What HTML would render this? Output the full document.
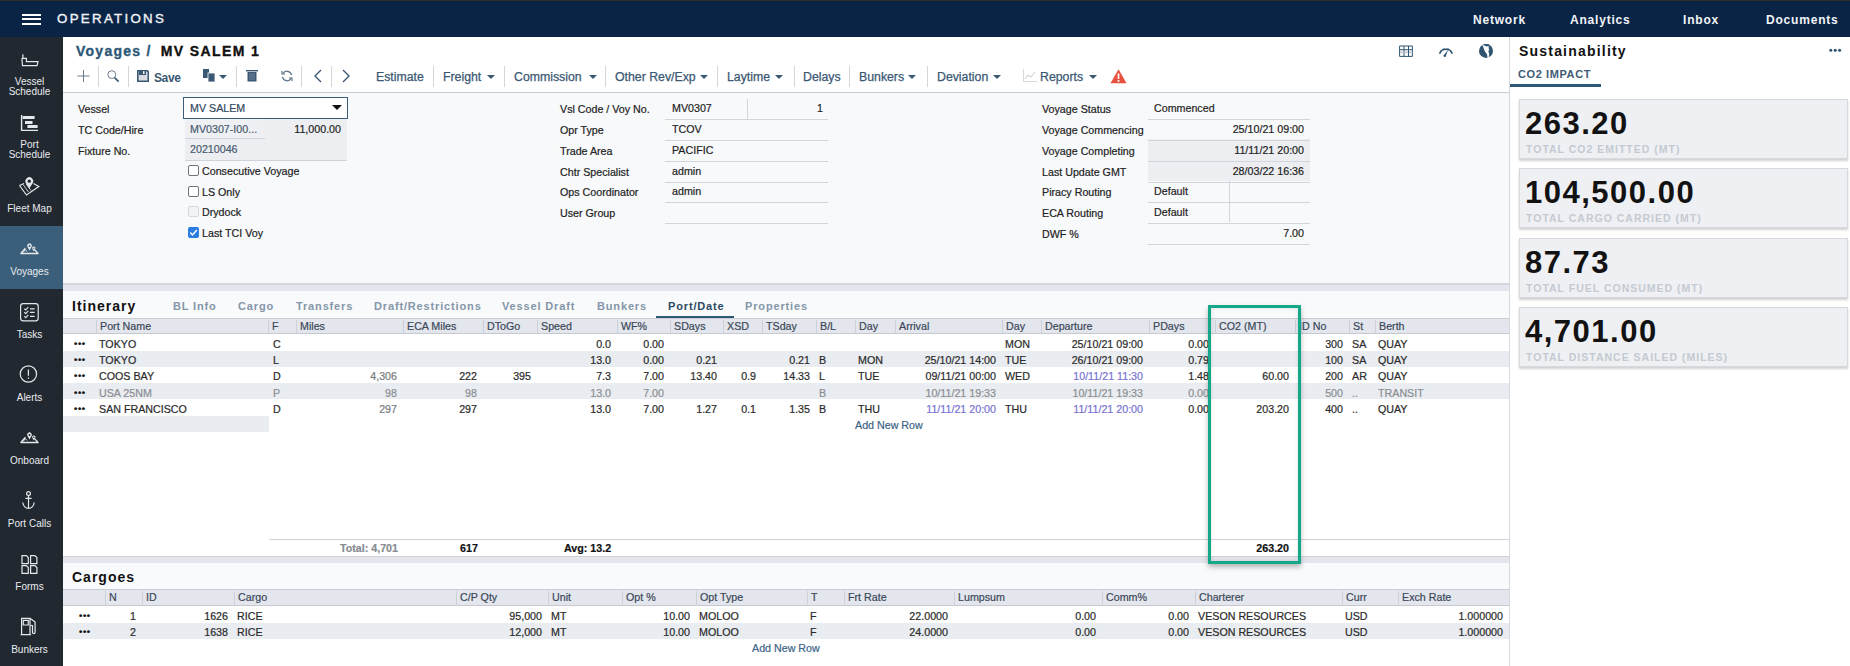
<!DOCTYPE html><html><head><meta charset="utf-8"><style>

*{box-sizing:border-box;margin:0;padding:0}
html,body{width:1850px;height:666px;overflow:hidden;background:#fff;font-family:"Liberation Sans",sans-serif;color:#1e1e1e}
.ab{position:absolute;white-space:nowrap}
#top{position:absolute;left:0;top:0;width:1850px;height:37px;background:#0a2446;border-top:1px solid #2e2c2a}
#side{position:absolute;left:0;top:37px;width:63px;height:629px;background:#21282f}
.si{position:absolute;left:0;width:63px;height:63px;color:#e8ebef;font-size:10px;text-align:center}
.si svg{position:absolute;left:0;top:0}
.si span{position:absolute;left:0;width:59px;text-align:center;line-height:10px}
#main{position:absolute;left:63px;top:37px;width:1447px;height:629px;background:#fff}
.tb{position:absolute;top:33px;font-size:12.3px;color:#3a5873;-webkit-text-stroke:0.25px #3a5873}
.sep{position:absolute;top:29px;width:1px;height:21px;background:#d3d7dd}
.car{position:absolute;top:38px;width:0;height:0;border-left:4px solid transparent;border-right:4px solid transparent;border-top:4px solid #3a5873}
.lbl{position:absolute;font-size:10.7px;color:#222;white-space:nowrap;-webkit-text-stroke:0.2px #222}
.val{position:absolute;font-size:10.7px;color:#1e1e1e;white-space:nowrap;-webkit-text-stroke:0.2px currentColor}
.hd{position:absolute;font-size:10.7px;color:#3b4859;white-space:nowrap;-webkit-text-stroke:0.2px #3b4859}
.c{position:absolute;font-size:10.7px;white-space:nowrap;color:#2a2a2a;-webkit-text-stroke:0.2px currentColor}
.r{text-align:right}
.tab{position:absolute;font-size:11px;font-weight:bold;color:#8496a8;letter-spacing:0.85px;white-space:nowrap}
.card{position:absolute;left:9px;width:329px;height:60px;background:#eff0f3;border:1px solid #d6d9de;box-shadow:0 2px 2px rgba(0,0,0,0.18)}
.card b{position:absolute;left:5px;top:6px;font-size:31px;letter-spacing:1.5px;color:#121212;font-weight:bold;white-space:nowrap}
.card i{position:absolute;left:6px;top:43px;font-style:normal;font-size:10.5px;letter-spacing:1px;color:#c4cad2;font-weight:bold;white-space:nowrap}

</style></head><body>
<div id="top">
<div class="ab" style="left:22px;top:12.9px;width:19px;height:1.8px;background:#fff"></div>
<div class="ab" style="left:22px;top:17px;width:19px;height:1.8px;background:#fff"></div>
<div class="ab" style="left:22px;top:21.9px;width:19px;height:1.8px;background:#fff"></div>
<div class="ab" style="left:57px;top:10px;font-size:13.3px;letter-spacing:2.3px;color:#f2f4f8;-webkit-text-stroke:0.35px #f2f4f8">OPERATIONS</div>
<div class="ab" style="left:1473px;top:12px;font-size:12px;letter-spacing:0.8px;color:#f2f4f8;font-weight:bold">Network</div>
<div class="ab" style="left:1570px;top:12px;font-size:12px;letter-spacing:0.8px;color:#f2f4f8;font-weight:bold">Analytics</div>
<div class="ab" style="left:1683px;top:12px;font-size:12px;letter-spacing:0.8px;color:#f2f4f8;font-weight:bold">Inbox</div>
<div class="ab" style="left:1766px;top:12px;font-size:12px;letter-spacing:0.8px;color:#f2f4f8;font-weight:bold">Documents</div>
</div>
<div id="side">
<div class="si" style="top:0px;"><svg width="63" height="63"><path d="M22.9 17.2V21.3M21.9 21.3H26.4V24.6H38L37 28.6H22.5L21.9 21.3" fill="none" stroke="#e4e7eb" stroke-width="1.2"/></svg><span style="top:40px">Vessel<br>Schedule</span></div>
<div class="si" style="top:63px;"><svg width="63" height="63"><path d="M21.6 15V30.4H38" fill="none" stroke="#e4e7eb" stroke-width="1.4"/><rect x="22.6" y="16" width="12" height="3" fill="#e4e7eb"/><rect x="25" y="21" width="7.5" height="3" fill="#e4e7eb"/><rect x="27.4" y="25" width="10.2" height="3" fill="#e4e7eb"/></svg><span style="top:40px">Port<br>Schedule</span></div>
<div class="si" style="top:126px;"><svg width="63" height="63"><path d="M19.5 22.5L24 20.5M33.5 20.5L38.8 23.5L26.5 32L19.5 22.5" fill="none" stroke="#e4e7eb" stroke-width="1.2"/><path d="M23 21.5L28.5 29M26 20.8L31 27.5" fill="none" stroke="#e4e7eb" stroke-width="0.9"/><path d="M29.3 25.4 L25.985 20.15 A3.9 3.9 0 1 1 32.615 20.15 Z" fill="#e4e7eb"/><circle cx="29.3" cy="18.2" r="1.64" fill="#21282f"/></svg><span style="top:41px">Fleet Map</span></div>
<div class="si" style="top:189px;background:#3b5f7a;"><svg width="63" height="63"><path d="M20.6 27.7 L25.4 22.3 M38.4 27.7 L33.6 22.6 M20.6 27.5H38.4" fill="none" stroke="#e4e7eb" stroke-width="1.3"/><path d="M23 26.6 L25.4 23.5 L27 25.5" fill="none" stroke="#e4e7eb" stroke-width="1"/><path d="M29.5 24.6 L27.46 21.099999999999998 A2.4 2.4 0 1 1 31.54 21.099999999999998 Z" fill="#e4e7eb"/><circle cx="29.5" cy="19.9" r="1.01" fill="#3b5f7a"/><path d="M33.8 25.5 L32.355 23.05 A1.7 1.7 0 1 1 35.245 23.05 Z" fill="#e4e7eb"/><circle cx="33.8" cy="22.2" r="0.71" fill="#3b5f7a"/></svg><span style="top:41px">Voyages</span></div>
<div class="si" style="top:252px;"><svg width="63" height="63"><rect x="20.6" y="14.6" width="17.6" height="17.2" rx="2.5" fill="none" stroke="#e4e7eb" stroke-width="1.2"/><path d="M24.2 19.6l1.5 1.4 2.6-2.8M24.2 23.2l1.5 1.4 2.6-2.8M24.2 27.2l1.5 1.4 2.6-2.8" fill="none" stroke="#e4e7eb" stroke-width="1.1"/><path d="M30 19.8h4.6M30 23.4h4.6M30 27.4h4.6" fill="none" stroke="#e4e7eb" stroke-width="1.3"/></svg><span style="top:41px">Tasks</span></div>
<div class="si" style="top:315px;"><svg width="63" height="63"><circle cx="28.4" cy="22" r="8.2" fill="none" stroke="#e4e7eb" stroke-width="1.2"/><path d="M28.4 17.6v6.2" stroke="#e4e7eb" stroke-width="1.2"/><rect x="27.8" y="25.5" width="1.3" height="1.3" fill="#e4e7eb"/></svg><span style="top:41px">Alerts</span></div>
<div class="si" style="top:378px;"><svg width="63" height="63"><path d="M20.6 27.7 L25.4 22.3 M38.4 27.7 L33.6 22.6 M20.6 27.5H38.4" fill="none" stroke="#e4e7eb" stroke-width="1.3"/><path d="M23 26.6 L25.4 23.5 L27 25.5" fill="none" stroke="#e4e7eb" stroke-width="1"/><path d="M29.5 24.6 L27.46 21.099999999999998 A2.4 2.4 0 1 1 31.54 21.099999999999998 Z" fill="#e4e7eb"/><circle cx="29.5" cy="19.9" r="1.01" fill="#21282f"/><path d="M33.8 25.5 L32.355 23.05 A1.7 1.7 0 1 1 35.245 23.05 Z" fill="#e4e7eb"/><circle cx="33.8" cy="22.2" r="0.71" fill="#21282f"/></svg><span style="top:41px">Onboard</span></div>
<div class="si" style="top:441px;"><svg width="63" height="63"><circle cx="28.5" cy="15.6" r="1.9" fill="none" stroke="#e4e7eb" stroke-width="1.2"/><path d="M28.5 17.5V30.3M25.4 20.3H31.6M22.7 24.5C23.5 28.5 26 30.3 28.5 30.3S33.5 28.5 34.3 24.5" fill="none" stroke="#e4e7eb" stroke-width="1.2"/></svg><span style="top:41px">Port Calls</span></div>
<div class="si" style="top:504px;"><svg width="63" height="63"><path d="M22 14.6h4.3l2 2v6.1H22zM30.6 14.6h4.3l2 2v6.1h-6.3zM22 24.6h4.3l2 2v5.8H22zM30.6 24.6h4.3l2 2v5.8h-6.3z" fill="none" stroke="#e4e7eb" stroke-width="1.2"/></svg><span style="top:41px">Forms</span></div>
<div class="si" style="top:567px;"><svg width="63" height="63"><path d="M21.6 30.3V14.4H30V30.3M20.6 30.6H31M23.3 16.4h5v4.6h-5z" fill="none" stroke="#e4e7eb" stroke-width="1.2"/><path d="M30.3 14.6l4.8 3.5v10.2a1.3 1.3 0 0 1-2.6 0V21.5h-2.2" fill="none" stroke="#e4e7eb" stroke-width="1.2"/></svg><span style="top:41px">Bunkers</span></div>
</div>
<div id="main">
<div class="ab" style="left:13px;top:6px;font-size:14px;font-weight:bold;letter-spacing:1.25px;color:#2c5777;-webkit-text-stroke:0.35px #2c5777">Voyages / <span style="color:#111;margin-left:4px;letter-spacing:1.4px;-webkit-text-stroke:0.35px #111">MV SALEM 1</span></div>
<svg class="ab" style="left:1336px;top:8px" width="14" height="12"><path d="M0.6 1h12.8v10.4H0.6zM0.6 4.7h12.8M5 1v10.4M9.5 1v10.4" fill="none" stroke="#2f5470" stroke-width="1"/><path d="M1.2 7.3h3.4M5.6 7.3h3.4M10 7.3h3.3" stroke="#c9ccd1" stroke-width="2"/></svg>
<svg class="ab" style="left:1375px;top:8px" width="16" height="12"><path d="M1.6 8.8A6.6 6.6 0 0 1 14.2 8.8" fill="none" stroke="#2f5470" stroke-width="1.6"/><path d="M3.2 4.2l1 0.8M7.9 2.5v1.2M12.6 4.2l-1 0.8" stroke="#fff" stroke-width="0.9"/><path d="M5.8 10.6L10.2 4.4L7.8 11.2z" fill="#2f5470"/><circle cx="6.8" cy="10.8" r="1.2" fill="#2f5470"/></svg>
<svg class="ab" style="left:1415px;top:6px" width="16" height="16"><circle cx="8" cy="7.9" r="7" fill="#2f5470"/><path d="M4.3 2.3C5.8 1.9 7.6 2.6 8.3 3.3L10.6 2.9C10.9 4.2 10.3 5.6 11.4 6.6C10.4 7.6 10.1 8.7 11 10.1C11.4 11.6 11.1 13.1 10.6 14.4L9.6 14.8C9.1 13.2 9.5 11.6 8.5 10.5C7.4 9.5 6.6 8.1 6.1 6.6C5.6 5 5.1 3.4 4.3 2.3Z" fill="#fff"/><path d="M5 1.6C7 0.6 10 0.7 11.8 2.1L10.6 2.9L8.3 3.3C7.6 2.6 5.8 1.9 5 1.6Z" fill="#2f5470"/></svg>
<div class="ab" style="left:0;top:55px;width:1447px;height:1px;background:#c8ccd3"></div>
<svg class="ab" style="left:14px;top:33px" width="13" height="13"><path d="M6.5 0v12M0.5 6h12" stroke="#5b6b80" stroke-width="0.9"/></svg>
<div class="sep" style="left:35px"></div>
<svg class="ab" style="left:44px;top:33px" width="13" height="13"><circle cx="4.8" cy="4.6" r="3.9" fill="none" stroke="#6a7b8f" stroke-width="1"/><path d="M7.6 7.6l4 4" stroke="#2f5470" stroke-width="1.5"/></svg>
<div class="sep" style="left:65px"></div>
<svg class="ab" style="left:74px;top:33px" width="12" height="12"><path d="M0.8 0.8h9.5l1 1v9.4H0.8z" fill="#d9dde3" stroke="#3a5873" stroke-width="1.6"/><rect x="2" y="0.5" width="7" height="4.5" fill="#3a5873"/><rect x="6" y="1.2" width="1.5" height="2.8" fill="#fff"/></svg>
<div class="tb" style="left:91px;font-weight:bold;font-size:12px;letter-spacing:-0.4px;-webkit-text-stroke:0;top:34px">Save</div>
<svg class="ab" style="left:140px;top:32px" width="13" height="13"><rect x="0" y="0" width="6" height="9" fill="#3a5873"/><rect x="5" y="4" width="7" height="9" fill="#3a5873" stroke="#fff" stroke-width="0.8"/></svg>
<div class="car" style="left:156px;top:38px"></div>
<div class="sep" style="left:173px"></div>
<svg class="ab" style="left:183px;top:32px" width="12" height="13"><rect x="0" y="1" width="12" height="1.4" fill="#3a5873"/><rect x="1.5" y="3" width="9" height="9.5" fill="#3a5873"/><path d="M4 4v7M6 4v7M8 4v7" stroke="#7d93a8" stroke-width="0.8"/></svg>
<svg class="ab" style="left:218px;top:33px" width="12" height="12"><path d="M10.5 5A4.6 4.6 0 0 0 2 3.5M1.5 7A4.6 4.6 0 0 0 10 8.5" fill="none" stroke="#5d7187" stroke-width="1.3"/><path d="M1 1v3h3M11 11V8H8" fill="none" stroke="#5d7187" stroke-width="1.2"/></svg>
<div class="sep" style="left:238px"></div>
<svg class="ab" style="left:250px;top:32px" width="9" height="14"><path d="M8 1L2 7l6 6" fill="none" stroke="#3a5873" stroke-width="1.4"/></svg>
<div class="sep" style="left:268px"></div>
<svg class="ab" style="left:279px;top:32px" width="9" height="14"><path d="M1 1l6 6-6 6" fill="none" stroke="#3a5873" stroke-width="1.4"/></svg>
<div class="tb" style="left:313px">Estimate</div>
<div class="sep" style="left:370px"></div>
<div class="tb" style="left:380px">Freight</div>
<div class="car" style="left:424px"></div>
<div class="sep" style="left:441px"></div>
<div class="tb" style="left:451px">Commission</div>
<div class="car" style="left:526px"></div>
<div class="sep" style="left:542px"></div>
<div class="tb" style="left:552px">Other Rev/Exp</div>
<div class="car" style="left:637px"></div>
<div class="sep" style="left:654px"></div>
<div class="tb" style="left:664px">Laytime</div>
<div class="car" style="left:712px"></div>
<div class="sep" style="left:731px"></div>
<div class="tb" style="left:740px">Delays</div>
<div class="sep" style="left:786px"></div>
<div class="tb" style="left:796px">Bunkers</div>
<div class="car" style="left:845px"></div>
<div class="sep" style="left:864px"></div>
<div class="tb" style="left:874px">Deviation</div>
<div class="car" style="left:930px"></div>
<div class="tb" style="left:977px">Reports</div>
<div class="car" style="left:1026px"></div>
<svg class="ab" style="left:960px;top:32px" width="14" height="13"><path d="M0.5 0v12.5H14" fill="none" stroke="#d5d9de" stroke-width="1"/><path d="M2 10l3-4 3 2 4-5" fill="none" stroke="#c3c9d0" stroke-width="1"/></svg>
<svg class="ab" style="left:1047px;top:32px" width="17" height="15"><path d="M8.5 0.3L16.5 14.3H0.5z" fill="#e8503e"/><path d="M8.5 4.5v5.5" stroke="#fff" stroke-width="1.7"/><rect x="7.6" y="11" width="1.8" height="1.8" fill="#fff"/></svg>
<div class="ab" style="left:0;top:56px;width:1446px;height:191px;background:#f8f9fb"></div>
<div class="lbl" style="left:15px;top:66px">Vessel</div>
<div class="lbl" style="left:15px;top:87px">TC Code/Hire</div>
<div class="lbl" style="left:15px;top:108px">Fixture No.</div>
<div class="ab" style="left:120px;top:60px;width:165px;height:22px;background:#fff;border:1.5px solid #3b5d79"></div>
<div class="val" style="left:127px;top:65px;color:#34495d">MV SALEM</div>
<div class="ab" style="left:269px;top:68px;width:0;height:0;border-left:5px solid transparent;border-right:5px solid transparent;border-top:5px solid #111"></div>
<div class="ab" style="left:122px;top:82px;width:162px;height:42px;background:#eceef2"></div>
<div class="ab" style="left:122px;top:82px;width:80px;height:20px;background:#eef0f3;border-bottom:1px solid #d0d4da"></div>
<div class="ab" style="left:122px;top:123px;width:162px;height:1px;background:#d0d4da"></div>
<div class="val" style="left:127px;top:86px;color:#4a5c70">MV0307-I00...</div>
<div class="val r" style="left:200px;width:78px;top:86px">11,000.00</div>
<div class="val" style="left:127px;top:106px;color:#4a5c70">20210046</div>
<div class="ab" style="left:125px;top:128px;width:11px;height:11px;background:#fff;border:1px solid #6e7378;border-radius:2px"></div>
<div class="lbl" style="left:139px;top:128px">Consecutive Voyage</div>
<div class="ab" style="left:125px;top:149px;width:11px;height:11px;background:#fff;border:1px solid #6e7378;border-radius:2px"></div>
<div class="lbl" style="left:139px;top:149px">LS Only</div>
<div class="ab" style="left:125px;top:169px;width:11px;height:11px;background:#f2f3f5;border:1px solid #d5d8dc;border-radius:2px"></div>
<div class="lbl" style="left:139px;top:169px">Drydock</div>
<div class="ab" style="left:125px;top:190px;width:11px;height:11px;background:#2a7de1;border-radius:2px"></div><svg class="ab" style="left:125px;top:190px" width="11" height="11"><path d="M2.3 5.6l2.2 2.3 4.3-4.8" fill="none" stroke="#fff" stroke-width="1.5"/></svg>
<div class="lbl" style="left:139px;top:190px">Last TCI Voy</div>
<div class="lbl" style="left:497px;top:66px">Vsl Code / Voy No.</div>
<div class="ab" style="left:602px;top:82px;width:163px;height:1px;background:#d2d6dc"></div>
<div class="lbl" style="left:497px;top:87px">Opr Type</div>
<div class="ab" style="left:602px;top:103px;width:163px;height:1px;background:#d2d6dc"></div>
<div class="lbl" style="left:497px;top:108px">Trade Area</div>
<div class="ab" style="left:602px;top:124px;width:163px;height:1px;background:#d2d6dc"></div>
<div class="lbl" style="left:497px;top:129px">Chtr Specialist</div>
<div class="ab" style="left:602px;top:145px;width:163px;height:1px;background:#d2d6dc"></div>
<div class="lbl" style="left:497px;top:149px">Ops Coordinator</div>
<div class="ab" style="left:602px;top:165px;width:163px;height:1px;background:#d2d6dc"></div>
<div class="lbl" style="left:497px;top:170px">User Group</div>
<div class="ab" style="left:602px;top:186px;width:163px;height:1px;background:#d2d6dc"></div>
<div class="ab" style="left:684px;top:62px;width:1px;height:20px;background:#d2d6dc"></div>
<div class="val" style="left:609px;top:65px">MV0307</div>
<div class="val" style="left:609px;top:86px">TCOV</div>
<div class="val" style="left:609px;top:107px">PACIFIC</div>
<div class="val" style="left:609px;top:128px">admin</div>
<div class="val" style="left:609px;top:148px">admin</div>
<div class="val r" style="left:700px;width:60px;top:65px">1</div>
<div class="lbl" style="left:979px;top:66px">Voyage Status</div>
<div class="lbl" style="left:979px;top:87px">Voyage Commencing</div>
<div class="lbl" style="left:979px;top:108px">Voyage Completing</div>
<div class="lbl" style="left:979px;top:129px">Last Update GMT</div>
<div class="lbl" style="left:979px;top:149px">Piracy Routing</div>
<div class="lbl" style="left:979px;top:170px">ECA Routing</div>
<div class="lbl" style="left:979px;top:191px">DWF %</div>
<div class="ab" style="left:1085px;top:102px;width:162px;height:42px;background:#eceef2"></div>
<div class="ab" style="left:1085px;top:82px;width:162px;height:1px;background:#d2d6dc"></div>
<div class="ab" style="left:1085px;top:103px;width:162px;height:1px;background:#d2d6dc"></div>
<div class="ab" style="left:1085px;top:124px;width:162px;height:1px;background:#d2d6dc"></div>
<div class="ab" style="left:1085px;top:145px;width:162px;height:1px;background:#d2d6dc"></div>
<div class="ab" style="left:1085px;top:165px;width:162px;height:1px;background:#d2d6dc"></div>
<div class="ab" style="left:1085px;top:186px;width:162px;height:1px;background:#d2d6dc"></div>
<div class="ab" style="left:1085px;top:207px;width:162px;height:1px;background:#d2d6dc"></div>
<div class="ab" style="left:1166px;top:144px;width:1px;height:41px;background:#d2d6dc"></div>
<div class="val" style="left:1091px;top:65px">Commenced</div>
<div class="val r" style="left:1100px;width:141px;top:86px">25/10/21 09:00</div>
<div class="val r" style="left:1100px;width:141px;top:107px">11/11/21 20:00</div>
<div class="val r" style="left:1100px;width:141px;top:128px">28/03/22 16:36</div>
<div class="val r" style="left:1100px;width:141px;top:190px">7.00</div>
<div class="val" style="left:1091px;top:148px">Default</div>
<div class="val" style="left:1091px;top:169px">Default</div>
<div class="ab" style="left:0;top:246px;width:1446px;height:2px;background:#d3d6dc"></div>
<div class="ab" style="left:0;top:248px;width:1446px;height:6px;background:#e5e6ed"></div>
<div class="ab" style="left:0;top:254px;width:1446px;height:27px;background:#f9fafc"></div>
<div class="ab" style="left:9px;top:261px;font-size:14px;font-weight:bold;letter-spacing:1px;color:#111">Itinerary</div>
<div class="tab" style="left:110px;top:263px;">BL Info</div>
<div class="tab" style="left:175px;top:263px;">Cargo</div>
<div class="tab" style="left:233px;top:263px;">Transfers</div>
<div class="tab" style="left:311px;top:263px;">Draft/Restrictions</div>
<div class="tab" style="left:439px;top:263px;">Vessel Draft</div>
<div class="tab" style="left:534px;top:263px;">Bunkers</div>
<div class="tab" style="left:605px;top:263px;color:#2c4a62;">Port/Date</div>
<div class="tab" style="left:682px;top:263px;">Properties</div>
<div class="ab" style="left:593px;top:279px;width:78px;height:2px;background:#2e5a78"></div>
<div class="ab" style="left:0;top:281px;width:1446px;height:1px;background:#c9ccd3"></div>
<div class="ab" style="left:0;top:282px;width:1446px;height:15px;background:#e4e6ed;border-bottom:1px solid #c6c9d0"></div>
<div class="ab" style="left:33px;top:283px;width:1px;height:13px;background:#cdd0d7"></div>
<div class="hd" style="left:37px;top:283px">Port Name</div>
<div class="ab" style="left:205px;top:283px;width:1px;height:13px;background:#cdd0d7"></div>
<div class="hd" style="left:209px;top:283px">F</div>
<div class="ab" style="left:233px;top:283px;width:1px;height:13px;background:#cdd0d7"></div>
<div class="hd" style="left:237px;top:283px">Miles</div>
<div class="ab" style="left:340px;top:283px;width:1px;height:13px;background:#cdd0d7"></div>
<div class="hd" style="left:344px;top:283px">ECA Miles</div>
<div class="ab" style="left:420px;top:283px;width:1px;height:13px;background:#cdd0d7"></div>
<div class="hd" style="left:424px;top:283px">DToGo</div>
<div class="ab" style="left:474px;top:283px;width:1px;height:13px;background:#cdd0d7"></div>
<div class="hd" style="left:478px;top:283px">Speed</div>
<div class="ab" style="left:554px;top:283px;width:1px;height:13px;background:#cdd0d7"></div>
<div class="hd" style="left:558px;top:283px">WF%</div>
<div class="ab" style="left:607px;top:283px;width:1px;height:13px;background:#cdd0d7"></div>
<div class="hd" style="left:611px;top:283px">SDays</div>
<div class="ab" style="left:660px;top:283px;width:1px;height:13px;background:#cdd0d7"></div>
<div class="hd" style="left:664px;top:283px">XSD</div>
<div class="ab" style="left:699px;top:283px;width:1px;height:13px;background:#cdd0d7"></div>
<div class="hd" style="left:703px;top:283px">TSday</div>
<div class="ab" style="left:753px;top:283px;width:1px;height:13px;background:#cdd0d7"></div>
<div class="hd" style="left:757px;top:283px">B/L</div>
<div class="ab" style="left:792px;top:283px;width:1px;height:13px;background:#cdd0d7"></div>
<div class="hd" style="left:796px;top:283px">Day</div>
<div class="ab" style="left:832px;top:283px;width:1px;height:13px;background:#cdd0d7"></div>
<div class="hd" style="left:836px;top:283px">Arrival</div>
<div class="ab" style="left:939px;top:283px;width:1px;height:13px;background:#cdd0d7"></div>
<div class="hd" style="left:943px;top:283px">Day</div>
<div class="ab" style="left:978px;top:283px;width:1px;height:13px;background:#cdd0d7"></div>
<div class="hd" style="left:982px;top:283px">Departure</div>
<div class="ab" style="left:1086px;top:283px;width:1px;height:13px;background:#cdd0d7"></div>
<div class="hd" style="left:1090px;top:283px">PDays</div>
<div class="ab" style="left:1152px;top:283px;width:1px;height:13px;background:#cdd0d7"></div>
<div class="hd" style="left:1156px;top:283px">CO2 (MT)</div>
<div class="ab" style="left:1232px;top:283px;width:1px;height:13px;background:#cdd0d7"></div>
<div class="hd" style="left:1236px;top:283px">ID No</div>
<div class="ab" style="left:1286px;top:283px;width:1px;height:13px;background:#cdd0d7"></div>
<div class="hd" style="left:1290px;top:283px">St</div>
<div class="ab" style="left:1312px;top:283px;width:1px;height:13px;background:#cdd0d7"></div>
<div class="hd" style="left:1316px;top:283px">Berth</div>
<div class="ab" style="left:0;top:314px;width:1446px;height:16px;background:#e9ecf0"></div>
<div class="ab" style="left:0;top:346px;width:1446px;height:16px;background:#e9ecf0"></div>
<div class="ab" style="left:0;top:379px;width:206px;height:16px;background:#e9ecf0"></div>
<div class="c" style="left:11px;top:301px;font-size:9.5px;font-weight:bold;letter-spacing:0.6px;color:#111">•••</div>
<div class="c" style="left:36px;top:301px;">TOKYO</div>
<div class="c" style="left:210px;top:301px;">C</div>
<div class="c r" style="left:398px;width:150px;top:301px;">0.0</div>
<div class="c r" style="left:451px;width:150px;top:301px;">0.00</div>
<div class="c" style="left:942px;top:301px;">MON</div>
<div class="c r" style="left:930px;width:150px;top:301px;">25/10/21 09:00</div>
<div class="c r" style="left:996px;width:150px;top:301px;">0.00</div>
<div class="c r" style="left:1130px;width:150px;top:301px;">300</div>
<div class="c" style="left:1289px;top:301px;">SA</div>
<div class="c" style="left:1315px;top:301px;">QUAY</div>
<div class="c" style="left:11px;top:317px;font-size:9.5px;font-weight:bold;letter-spacing:0.6px;color:#111">•••</div>
<div class="c" style="left:36px;top:317px;">TOKYO</div>
<div class="c" style="left:210px;top:317px;">L</div>
<div class="c r" style="left:398px;width:150px;top:317px;">13.0</div>
<div class="c r" style="left:451px;width:150px;top:317px;">0.00</div>
<div class="c r" style="left:504px;width:150px;top:317px;">0.21</div>
<div class="c r" style="left:597px;width:150px;top:317px;">0.21</div>
<div class="c" style="left:756px;top:317px;">B</div>
<div class="c" style="left:795px;top:317px;">MON</div>
<div class="c r" style="left:783px;width:150px;top:317px;">25/10/21 14:00</div>
<div class="c" style="left:942px;top:317px;">TUE</div>
<div class="c r" style="left:930px;width:150px;top:317px;">26/10/21 09:00</div>
<div class="c r" style="left:996px;width:150px;top:317px;">0.79</div>
<div class="c r" style="left:1130px;width:150px;top:317px;">100</div>
<div class="c" style="left:1289px;top:317px;">SA</div>
<div class="c" style="left:1315px;top:317px;">QUAY</div>
<div class="c" style="left:11px;top:333px;font-size:9.5px;font-weight:bold;letter-spacing:0.6px;color:#111">•••</div>
<div class="c" style="left:36px;top:333px;">COOS BAY</div>
<div class="c" style="left:210px;top:333px;">D</div>
<div class="c r" style="left:184px;width:150px;top:333px;color:#777b80;">4,306</div>
<div class="c r" style="left:264px;width:150px;top:333px;">222</div>
<div class="c r" style="left:318px;width:150px;top:333px;">395</div>
<div class="c r" style="left:398px;width:150px;top:333px;">7.3</div>
<div class="c r" style="left:451px;width:150px;top:333px;">7.00</div>
<div class="c r" style="left:504px;width:150px;top:333px;">13.40</div>
<div class="c r" style="left:543px;width:150px;top:333px;">0.9</div>
<div class="c r" style="left:597px;width:150px;top:333px;">14.33</div>
<div class="c" style="left:756px;top:333px;">L</div>
<div class="c" style="left:795px;top:333px;">TUE</div>
<div class="c r" style="left:783px;width:150px;top:333px;">09/11/21 00:00</div>
<div class="c" style="left:942px;top:333px;">WED</div>
<div class="c r" style="left:930px;width:150px;top:333px;color:#7673d2;">10/11/21 11:30</div>
<div class="c r" style="left:996px;width:150px;top:333px;">1.48</div>
<div class="c r" style="left:1076px;width:150px;top:333px;">60.00</div>
<div class="c r" style="left:1130px;width:150px;top:333px;">200</div>
<div class="c" style="left:1289px;top:333px;">AR</div>
<div class="c" style="left:1315px;top:333px;">QUAY</div>
<div class="c" style="left:11px;top:350px;font-size:9.5px;font-weight:bold;letter-spacing:0.6px;color:#111">•••</div>
<div class="c" style="left:36px;top:350px;color:#8b8e92;">USA 25NM</div>
<div class="c" style="left:210px;top:350px;color:#8b8e92;">P</div>
<div class="c r" style="left:184px;width:150px;top:350px;color:#8b8e92;">98</div>
<div class="c r" style="left:264px;width:150px;top:350px;color:#8b8e92;">98</div>
<div class="c r" style="left:398px;width:150px;top:350px;color:#8b8e92;">13.0</div>
<div class="c r" style="left:451px;width:150px;top:350px;color:#8b8e92;">7.00</div>
<div class="c" style="left:756px;top:350px;color:#8b8e92;">B</div>
<div class="c r" style="left:783px;width:150px;top:350px;color:#8b8e92;">10/11/21 19:33</div>
<div class="c r" style="left:930px;width:150px;top:350px;color:#8b8e92;">10/11/21 19:33</div>
<div class="c r" style="left:996px;width:150px;top:350px;color:#8b8e92;">0.00</div>
<div class="c r" style="left:1130px;width:150px;top:350px;color:#8b8e92;">500</div>
<div class="c" style="left:1289px;top:350px;color:#8b8e92;">..</div>
<div class="c" style="left:1315px;top:350px;color:#8b8e92;">TRANSIT</div>
<div class="c" style="left:11px;top:366px;font-size:9.5px;font-weight:bold;letter-spacing:0.6px;color:#111">•••</div>
<div class="c" style="left:36px;top:366px;">SAN FRANCISCO</div>
<div class="c" style="left:210px;top:366px;">D</div>
<div class="c r" style="left:184px;width:150px;top:366px;color:#777b80;">297</div>
<div class="c r" style="left:264px;width:150px;top:366px;">297</div>
<div class="c r" style="left:398px;width:150px;top:366px;">13.0</div>
<div class="c r" style="left:451px;width:150px;top:366px;">7.00</div>
<div class="c r" style="left:504px;width:150px;top:366px;">1.27</div>
<div class="c r" style="left:543px;width:150px;top:366px;">0.1</div>
<div class="c r" style="left:597px;width:150px;top:366px;">1.35</div>
<div class="c" style="left:756px;top:366px;">B</div>
<div class="c" style="left:795px;top:366px;">THU</div>
<div class="c r" style="left:783px;width:150px;top:366px;color:#7673d2;">11/11/21 20:00</div>
<div class="c" style="left:942px;top:366px;">THU</div>
<div class="c r" style="left:930px;width:150px;top:366px;color:#7673d2;">11/11/21 20:00</div>
<div class="c r" style="left:996px;width:150px;top:366px;">0.00</div>
<div class="c r" style="left:1076px;width:150px;top:366px;">203.20</div>
<div class="c r" style="left:1130px;width:150px;top:366px;">400</div>
<div class="c" style="left:1289px;top:366px;">..</div>
<div class="c" style="left:1315px;top:366px;">QUAY</div>
<div class="c" style="left:792px;top:382px;color:#3d6385">Add New Row</div>
<div class="ab" style="left:206px;top:502px;width:1240px;height:1px;background:#cfd2d8"></div>
<div class="c" style="left:277px;top:505px;font-weight:bold;color:#888c91">Total: 4,701</div>
<div class="c" style="left:397px;top:505px;font-weight:bold;color:#111">617</div>
<div class="c" style="left:501px;top:505px;font-weight:bold;color:#111">Avg: 13.2</div>
<div class="c r" style="left:1076px;width:150px;top:505px;font-weight:bold;color:#111">263.20</div>
<div class="ab" style="left:0;top:519px;width:1446px;height:1px;background:#cfd2d8"></div>
<div class="ab" style="left:0;top:520px;width:1446px;height:6px;background:#e5e6ed"></div>
<div class="ab" style="left:0;top:526px;width:1446px;height:27px;background:#f9fafc"></div>
<div class="ab" style="left:9px;top:532px;font-size:14px;font-weight:bold;letter-spacing:1px;color:#111">Cargoes</div>
<div class="ab" style="left:0;top:552px;width:1446px;height:1px;background:#c9ccd3"></div>
<div class="ab" style="left:0;top:553px;width:1446px;height:16px;background:#e4e6ed;border-bottom:1px solid #c6c9d0"></div>
<div class="ab" style="left:42px;top:554px;width:1px;height:15px;background:#cdd0d7"></div>
<div class="hd" style="left:46px;top:554px">N</div>
<div class="ab" style="left:79px;top:554px;width:1px;height:15px;background:#cdd0d7"></div>
<div class="hd" style="left:83px;top:554px">ID</div>
<div class="ab" style="left:171px;top:554px;width:1px;height:15px;background:#cdd0d7"></div>
<div class="hd" style="left:175px;top:554px">Cargo</div>
<div class="ab" style="left:393px;top:554px;width:1px;height:15px;background:#cdd0d7"></div>
<div class="hd" style="left:397px;top:554px">C/P Qty</div>
<div class="ab" style="left:485px;top:554px;width:1px;height:15px;background:#cdd0d7"></div>
<div class="hd" style="left:489px;top:554px">Unit</div>
<div class="ab" style="left:559px;top:554px;width:1px;height:15px;background:#cdd0d7"></div>
<div class="hd" style="left:563px;top:554px">Opt %</div>
<div class="ab" style="left:633px;top:554px;width:1px;height:15px;background:#cdd0d7"></div>
<div class="hd" style="left:637px;top:554px">Opt Type</div>
<div class="ab" style="left:744px;top:554px;width:1px;height:15px;background:#cdd0d7"></div>
<div class="hd" style="left:748px;top:554px">T</div>
<div class="ab" style="left:781px;top:554px;width:1px;height:15px;background:#cdd0d7"></div>
<div class="hd" style="left:785px;top:554px">Frt Rate</div>
<div class="ab" style="left:891px;top:554px;width:1px;height:15px;background:#cdd0d7"></div>
<div class="hd" style="left:895px;top:554px">Lumpsum</div>
<div class="ab" style="left:1039px;top:554px;width:1px;height:15px;background:#cdd0d7"></div>
<div class="hd" style="left:1043px;top:554px">Comm%</div>
<div class="ab" style="left:1132px;top:554px;width:1px;height:15px;background:#cdd0d7"></div>
<div class="hd" style="left:1136px;top:554px">Charterer</div>
<div class="ab" style="left:1279px;top:554px;width:1px;height:15px;background:#cdd0d7"></div>
<div class="hd" style="left:1283px;top:554px">Curr</div>
<div class="ab" style="left:1335px;top:554px;width:1px;height:15px;background:#cdd0d7"></div>
<div class="hd" style="left:1339px;top:554px">Exch Rate</div>
<div class="ab" style="left:0;top:586px;width:1446px;height:16px;background:#e9ecf0"></div>
<div class="c" style="left:16px;top:573px;font-size:9.5px;font-weight:bold;letter-spacing:0.6px;color:#111">•••</div>
<div class="c r" style="left:-77px;width:150px;top:573px">1</div>
<div class="c r" style="left:15px;width:150px;top:573px">1626</div>
<div class="c" style="left:174px;top:573px">RICE</div>
<div class="c r" style="left:329px;width:150px;top:573px">95,000</div>
<div class="c" style="left:488px;top:573px">MT</div>
<div class="c r" style="left:477px;width:150px;top:573px">10.00</div>
<div class="c" style="left:636px;top:573px">MOLOO</div>
<div class="c" style="left:747px;top:573px">F</div>
<div class="c r" style="left:735px;width:150px;top:573px">22.0000</div>
<div class="c r" style="left:883px;width:150px;top:573px">0.00</div>
<div class="c r" style="left:976px;width:150px;top:573px">0.00</div>
<div class="c" style="left:1135px;top:573px">VESON RESOURCES</div>
<div class="c" style="left:1282px;top:573px">USD</div>
<div class="c r" style="left:1290px;width:150px;top:573px">1.000000</div>
<div class="c" style="left:16px;top:589px;font-size:9.5px;font-weight:bold;letter-spacing:0.6px;color:#111">•••</div>
<div class="c r" style="left:-77px;width:150px;top:589px">2</div>
<div class="c r" style="left:15px;width:150px;top:589px">1638</div>
<div class="c" style="left:174px;top:589px">RICE</div>
<div class="c r" style="left:329px;width:150px;top:589px">12,000</div>
<div class="c" style="left:488px;top:589px">MT</div>
<div class="c r" style="left:477px;width:150px;top:589px">10.00</div>
<div class="c" style="left:636px;top:589px">MOLOO</div>
<div class="c" style="left:747px;top:589px">F</div>
<div class="c r" style="left:735px;width:150px;top:589px">24.0000</div>
<div class="c r" style="left:883px;width:150px;top:589px">0.00</div>
<div class="c r" style="left:976px;width:150px;top:589px">0.00</div>
<div class="c" style="left:1135px;top:589px">VESON RESOURCES</div>
<div class="c" style="left:1282px;top:589px">USD</div>
<div class="c r" style="left:1290px;width:150px;top:589px">1.000000</div>
<div class="c" style="left:689px;top:605px;color:#3d6385">Add New Row</div>
<div class="ab" style="left:1446px;top:56px;width:1px;height:573px;background:#d7dbe1"></div>
<div class="ab" style="left:1145px;top:268px;width:93px;height:259px;border:3px solid #14a888;box-shadow:0 3px 5px rgba(0,0,0,0.28), inset 0 0 4px rgba(0,0,0,0.12)"></div>
</div>
<div class="ab" style="left:1509px;top:37px;width:341px;height:629px;background:#fff;border-left:1px solid #d5d9df">
<div class="ab" style="left:9px;top:6px;font-size:14px;font-weight:bold;letter-spacing:1.2px;color:#111">Sustainability</div>
<svg class="ab" style="left:319px;top:11px" width="14" height="5"><circle cx="1.8" cy="2.2" r="1.5" fill="#2f5470"/><circle cx="6.2" cy="2.2" r="1.5" fill="#2f5470"/><circle cx="10.6" cy="2.2" r="1.5" fill="#2f5470"/></svg>
<div class="ab" style="left:8px;top:31px;font-size:11px;font-weight:bold;letter-spacing:0.6px;color:#3e5c76">CO2 IMPACT</div>
<div class="ab" style="left:0;top:47px;width:91px;height:3px;background:#2e5a78"></div>
<div class="card" style="top:62px"><b>263.20</b><i>TOTAL CO2 EMITTED (MT)</i></div>
<div class="card" style="top:131px"><b>104,500.00</b><i>TOTAL CARGO CARRIED (MT)</i></div>
<div class="card" style="top:201px"><b>87.73</b><i>TOTAL FUEL CONSUMED (MT)</i></div>
<div class="card" style="top:270px"><b>4,701.00</b><i>TOTAL DISTANCE SAILED (MILES)</i></div>
</div>
</body></html>
